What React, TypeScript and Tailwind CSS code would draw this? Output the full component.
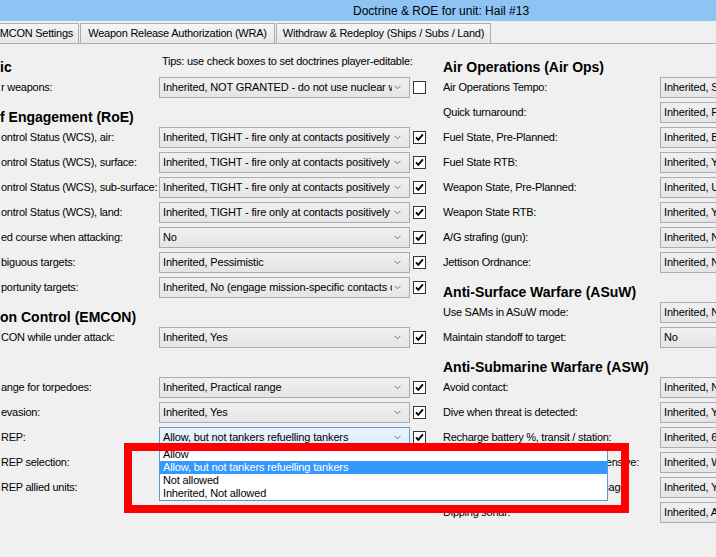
import React from 'react';

type Row =
  | { head: string; tips?: boolean }
  | { label: string; value: string; checked?: boolean; focus?: boolean };

const left: Row[] = [
  { head: 'ic', tips: true },
  { label: 'r weapons:', value: 'Inherited, NOT GRANTED - do not use nuclear weapons', checked: false },
  { head: 'f Engagement (RoE)' },
  { label: 'ontrol Status (WCS), air:', value: 'Inherited, TIGHT - fire only at contacts positively identified as hostile', checked: true },
  { label: 'ontrol Status (WCS), surface:', value: 'Inherited, TIGHT - fire only at contacts positively identified as hostile', checked: true },
  { label: 'ontrol Status (WCS), sub-surface:', value: 'Inherited, TIGHT - fire only at contacts positively identified as hostile', checked: true },
  { label: 'ontrol Status (WCS), land:', value: 'Inherited, TIGHT - fire only at contacts positively identified as hostile', checked: true },
  { label: 'ed course when attacking:', value: 'No', checked: true },
  { label: 'biguous targets:', value: 'Inherited, Pessimistic', checked: true },
  { label: 'portunity targets:', value: 'Inherited, No (engage mission-specific contacts only)', checked: true },
  { head: 'on Control (EMCON)' },
  { label: 'CON while under attack:', value: 'Inherited, Yes', checked: true },
  { head: '' },
  { label: 'ange for torpedoes:', value: 'Inherited, Practical range', checked: true },
  { label: 'evasion:', value: 'Inherited, Yes', checked: true },
  { label: 'REP:', value: 'Allow, but not tankers refuelling tankers', checked: true, focus: true },
  { label: 'REP selection:', value: 'Inherited, Tanker (always)', checked: true },
  { label: 'REP allied units:', value: 'Inherited, Yes', checked: true },
];

const right: Row[] = [
  { head: 'Air Operations (Air Ops)' },
  { label: 'Air Operations Tempo:', value: 'Inherited, Surge' },
  { label: 'Quick turnaround:', value: 'Inherited, Fighters and ASW' },
  { label: 'Fuel State, Pre-Planned:', value: 'Inherited, Bingo' },
  { label: 'Fuel State RTB:', value: 'Inherited, Yes - Leave group' },
  { label: 'Weapon State, Pre-Planned:', value: 'Inherited, Use Winchester' },
  { label: 'Weapon State RTB:', value: 'Inherited, Yes - Leave group' },
  { label: 'A/G strafing (gun):', value: 'Inherited, No' },
  { label: 'Jettison Ordnance:', value: 'Inherited, No' },
  { head: 'Anti-Surface Warfare (ASuW)' },
  { label: 'Use SAMs in ASuW mode:', value: 'Inherited, No' },
  { label: 'Maintain standoff to target:', value: 'No' },
  { head: 'Anti-Submarine Warfare (ASW)' },
  { label: 'Avoid contact:', value: 'Inherited, No' },
  { label: 'Dive when threat is detected:', value: 'Inherited, Yes' },
  { label: 'Recharge battery %, transit / station:', value: 'Inherited, 60%' },
  { label: 'Recharge battery %, offensive / defensive:', value: 'Inherited, When needed' },
  { label: 'Air-independent propulsion (AIP) usage:', value: 'Inherited, Yes' },
  { label: 'Dipping sonar:', value: 'Inherited, Automatic' },
];

const options = [
  'Allow',
  'Allow, but not tankers refuelling tankers',
  'Not allowed',
  'Inherited, Not allowed',
];

function Check({ checked }: { checked: boolean }) {
  return (
    <div className="w-[13px] h-[13px] shrink-0 border border-[#333333] bg-white flex items-center justify-center">
      {checked && (
        <svg width="11" height="11" viewBox="0 0 11 11">
          <path d="M2 5.4 L4.3 7.9 L8.9 2.4" fill="none" stroke="#000" strokeWidth="1.9" />
        </svg>
      )}
    </div>
  );
}

function Combo({ value, focus }: { value: string; focus?: boolean }) {
  return (
    <div
      className={
        focus
          ? 'w-[251px] h-[21px] shrink-0 flex items-center border border-[#569de5] bg-linear-to-b from-[#ecf4fc] to-[#dcecfc]'
          : 'w-[251px] h-[21px] shrink-0 flex items-center border border-[#acacac] bg-linear-to-b from-[#f0f0f0] to-[#e5e5e5]'
      }
    >
      <span className="flex-1 min-w-0 overflow-hidden whitespace-nowrap pl-[3px] leading-[13px] tracking-[-0.15px]">{value}</span>
      <svg width="7" height="5" viewBox="0 0 7 5" className="ml-[2px] mr-[8px] shrink-0">
        <path d="M0.5 0.8 L3.5 3.8 L6.5 0.8" fill="none" stroke="#707070" strokeWidth="1" />
      </svg>
    </div>
  );
}

function Column({ rows, labelW, side }: { rows: Row[]; labelW: string; side: 'left' | 'right' }) {
  return (
    <div className="flex flex-col shrink-0">
      {rows.map((r, i) =>
        'head' in r ? (
          <div key={i} className="h-[25px] flex items-end relative">
            <span className="text-[14px] font-bold leading-[16px] tracking-normal whitespace-nowrap">{r.head}</span>
            {r.tips && (
              <span className="absolute left-[162px] top-[5px] leading-[13px] whitespace-nowrap">
                Tips: use check boxes to set doctrines player-editable:
              </span>
            )}
          </div>
        ) : (
          <div key={i} className="h-[25px] flex items-center">
            <div className={`${labelW} shrink-0 overflow-hidden whitespace-nowrap leading-[13px] ${side === 'left' ? 'pl-[1px]' : ''}`}>
              {r.label}
            </div>
            <Combo value={r.value} focus={r.focus} />
            <div className="w-[3px] shrink-0" />
            <Check checked={!!r.checked} />
          </div>
        )
      )}
    </div>
  );
}

export default function App() {
  return (
    <div className="w-[716px] h-[557px] overflow-hidden relative bg-[#f0f0f0] text-black text-[11px] tracking-[-0.25px] font-['Liberation_Sans',Arial,sans-serif]">
      {/* title bar */}
      <div className="h-[21px] bg-[#8dc4f3] flex items-center pl-[353px] text-[12px] tracking-normal whitespace-nowrap">
        Doctrine &amp; ROE for unit: Hail #13
      </div>

      {/* tab strip */}
      <div className="pt-[2px] flex items-end border-b border-[#adadad] whitespace-nowrap">
        <div className="ml-[-20px] w-[99px] h-[20px] border border-b-0 border-[#acacac] bg-linear-to-b from-[#f5f5f5] to-[#e8e8e8] flex items-center justify-end pr-[5px]">
          EMCON Settings
        </div>
        <div className="ml-[1px] w-[195px] h-[20px] border border-b-0 border-[#acacac] bg-linear-to-b from-[#f5f5f5] to-[#e8e8e8] flex items-center justify-center">
          Weapon Release Authorization (WRA)
        </div>
        <div className="ml-[1px] w-[215px] h-[20px] border border-b-0 border-[#acacac] bg-linear-to-b from-[#f5f5f5] to-[#e8e8e8] flex items-center justify-center">
          Withdraw &amp; Redeploy (Ships / Subs / Land)
        </div>
      </div>

      {/* page */}
      <div className="pt-[6px] flex">
        <Column rows={left} labelW="w-[159px]" side="left" />
        <div className="w-[17px] shrink-0" />
        <Column rows={right} labelW="w-[217px]" side="right" />
      </div>

      {/* open dropdown list of the UNREP combo */}
      <div className="absolute left-[159px] top-[447px] w-[449px] border border-[#5b9bd5] bg-white tracking-[-0.15px]">
        {options.map((o, i) => (
          <div
            key={o}
            className={`h-[13px] pl-[3px] leading-[13px] whitespace-nowrap ${i === 1 ? 'bg-[#3399ff] text-white' : ''}`}
          >
            {o}
          </div>
        ))}
      </div>

      {/* red annotation box */}
      <div className="absolute left-[124px] top-[443px] w-[505px] h-[70px] border-[8px] border-[#ff0000]" />
    </div>
  );
}
